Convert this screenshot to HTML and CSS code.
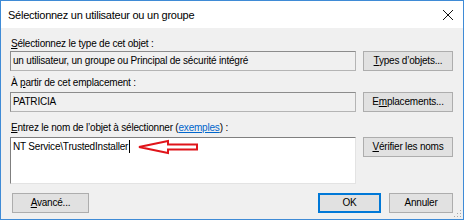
FILE: index.html
```html
<!DOCTYPE html>
<html lang="fr">
<head>
<meta charset="utf-8">
<title>Sélectionnez un utilisateur ou un groupe</title>
<link rel="stylesheet" href="styles.css">
</head>
<body>
<div class="window">
  <div class="titlebar">
    <span class="title">Sélectionnez un utilisateur ou un groupe</span>
    <svg class="close" width="12" height="12" viewBox="0 0 12 12"><path d="M1 1 L11 11 M11 1 L1 11" stroke="#111" stroke-width="1" fill="none"/></svg>
  </div>
  <div class="content">
    <div class="label label-first"><u>S</u>électionnez le type de cet objet :</div>
    <div class="row">
      <div class="field ro">un utilisateur, un groupe ou Principal de sécurité intégré</div>
      <button class="btn btn-side"><u>T</u>ypes d’objets...</button>
    </div>
    <div class="label label-second">À <u>p</u>artir de cet emplacement :</div>
    <div class="row row-second">
      <div class="field ro">PATRICIA</div>
      <button class="btn btn-side">E<u>m</u>placements...</button>
    </div>
    <div class="label label-third"><u>E</u>ntrez le nom de l’objet à sélectionner (<span class="link">exemples</span>) :</div>
    <div class="row row-third">
      <div class="field edit">
        <span class="edit-text">NT Service\TrustedInstaller</span><span class="caret"></span>
        <svg class="arrow" width="64" height="16" viewBox="0 0 64 16"><path d="M2 8 L31 2 L31 5.5 L60 5.5 L60 10.5 L31 10.5 L31 14 Z" fill="#fff" stroke="#e0141a" stroke-width="2" stroke-linejoin="miter"/></svg>
      </div>
      <button class="btn btn-side"><u>V</u>érifier les noms</button>
    </div>
    <div class="bottom">
      <button class="btn btn-adv"><u>A</u>vancé...</button>
      <div class="actions">
        <button class="btn btn-ok">OK</button>
        <button class="btn btn-cancel">Annuler</button>
      </div>
    </div>
  </div>
  <svg class="grip" width="8" height="8" viewBox="0 0 8 8">
    <rect x="6" y="0" width="1" height="1" fill="#a8a8a8"/>
    <rect x="3" y="3" width="1" height="1" fill="#a8a8a8"/>
    <rect x="6" y="3" width="1" height="1" fill="#a8a8a8"/>
    <rect x="0" y="6" width="1" height="1" fill="#a8a8a8"/>
    <rect x="3" y="6" width="1" height="1" fill="#a8a8a8"/>
    <rect x="6" y="6" width="1" height="1" fill="#a8a8a8"/>
  </svg>
</div>
</body>
</html>
```
FILE: styles.css
```css
* { box-sizing: border-box; }
html, body { margin: 0; padding: 0; }
body { background: #ffffff; }

.window {
  position: relative;
  width: 464px;
  height: 220px;
  border: 1px solid #3f8bd6;
  background: #f0f0f0;
  font-family: "Liberation Sans", Arial, sans-serif;
  font-size: 10px;
  letter-spacing: -0.2px;
  color: #000;
  display: flex;
  flex-direction: column;
}

.titlebar {
  height: 27px;
  background: #ffffff;
  display: flex;
  align-items: center;
  justify-content: space-between;
  padding: 0 9px 0 7px;
}
.title {
  font-size: 11px;
  letter-spacing: -0.25px;
  color: #000;
}
.close { display: block; }

.content {
  padding: 0 10px 0 9px;
  display: flex;
  flex-direction: column;
}

.label {
  line-height: 13px;
  height: 13px;
  margin-left: 1px;
  white-space: nowrap;
}
.label-first { margin-top: 9px; }
.label-second { margin-top: 5px; }
.label-third { margin-top: 9px; }
.link { color: #0066cc; text-decoration: underline; }

.row {
  display: flex;
  gap: 7px;
  align-items: flex-start;
  margin-top: 1px;
}
.row-second { margin-top: 3px; }
.row-third { margin-top: 3px; }

.field {
  width: 346px;
  height: 20px;
  padding: 0 2px;
  line-height: 18px;
  white-space: nowrap;
  border: 1px solid;
}
.ro {
  background: #f0f0f0;
  border-color: #8c8c8c #b4b4b4 #b4b4b4 #8c8c8c;
}
.edit {
  position: relative;
  height: 47px;
  background: #ffffff;
  border-color: #7f7f7f #e3e3e3 #e3e3e3 #7f7f7f;
  padding-top: 2px;
  line-height: 13px;
}
.caret {
  display: inline-block;
  width: 1px;
  height: 13px;
  background: #000;
  vertical-align: top;
  margin-left: 1px;
}
.arrow {
  position: absolute;
  left: 126px;
  top: 1px;
}

.btn {
  font-family: inherit;
  font-size: 10px;
  letter-spacing: -0.2px;
  color: #000;
  background: #e1e1e1;
  border: 1px solid #adadad;
  height: 20px;
  padding: 0;
  margin: 0;
  line-height: 18px;
  text-align: center;
  white-space: nowrap;
}
.btn-side { width: 90px; }

.bottom {
  margin-top: 9px;
  display: flex;
  justify-content: space-between;
  align-items: flex-start;
}
.btn-adv { width: 77px; margin-left: 2px; }
.actions { display: flex; gap: 8px; }
.btn-ok {
  width: 63px;
  border-color: #0078d7;
  box-shadow: inset 0 0 0 1px #0078d7;
}
.btn-cancel { width: 64px; }

.grip {
  position: absolute;
  right: 1px;
  bottom: 1px;
}
```
